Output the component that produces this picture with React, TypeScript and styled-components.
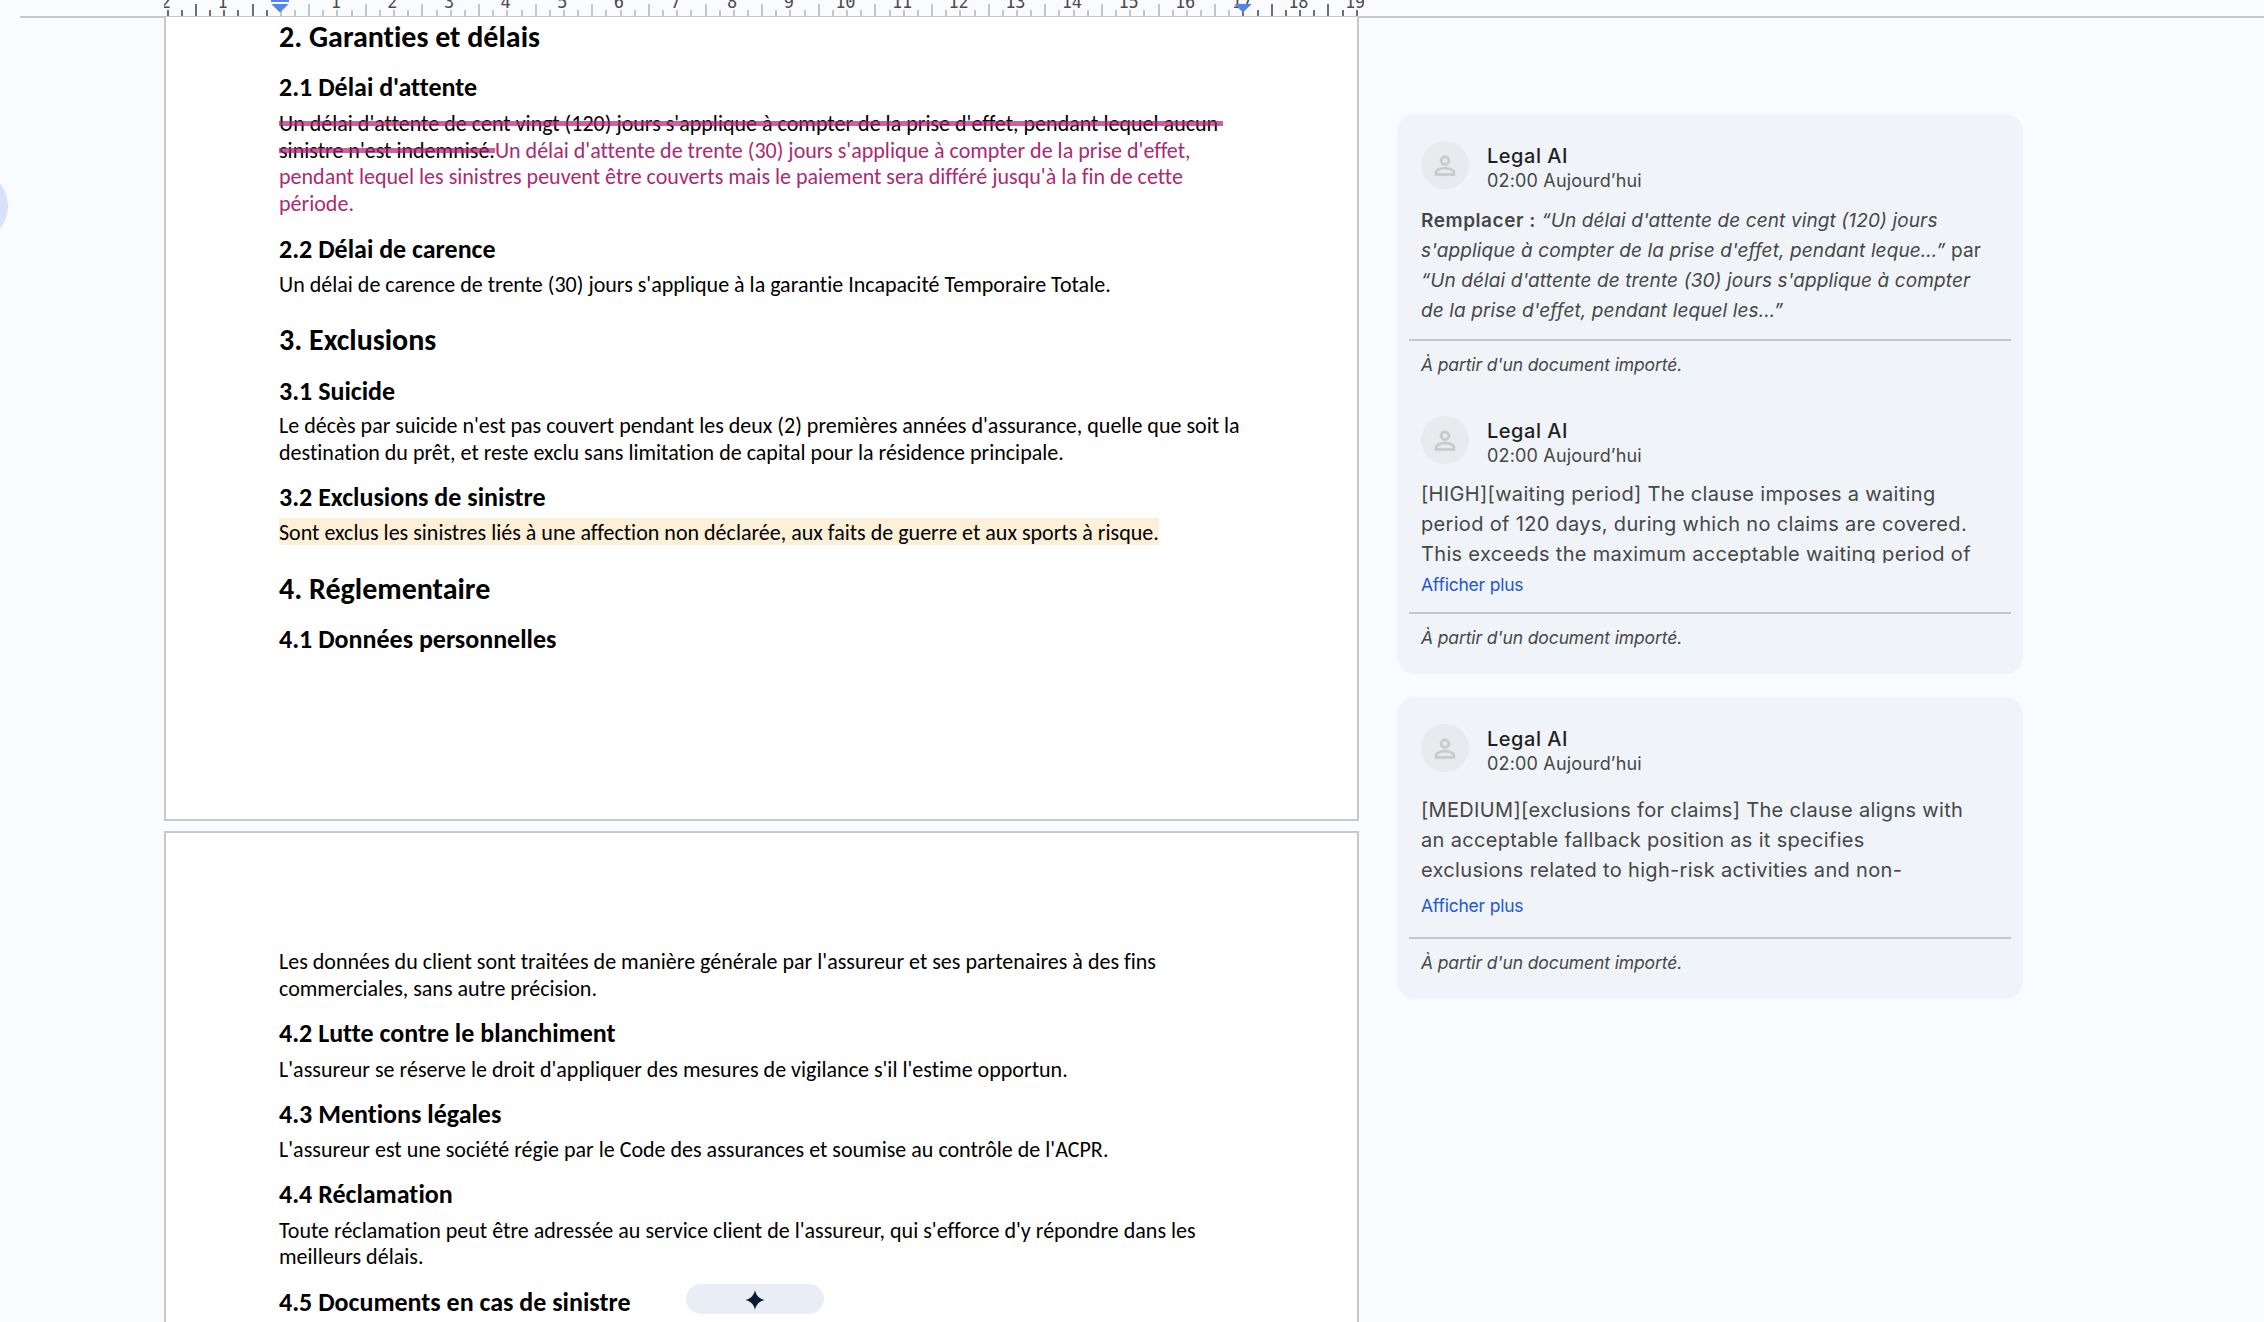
import React from "react";
import styled, { createGlobalStyle, css } from "styled-components";

const GlobalStyle = createGlobalStyle`
  *, *::before, *::after { box-sizing: border-box; }
  body { margin: 0; background: #f9fbff; overflow: hidden; }
`;

const DOC_FONT = `Carlito, Calibri, Lato, "Open Sans", sans-serif`;
const UI_FONT = `Inter, "Open Sans", Roboto, sans-serif`;

const Shell = styled.div`
  display: flex;
  flex-direction: column;
  position: relative;
  width: 2264px;
  height: 1322px;
  overflow: hidden;
  background: #f9fbff;
  font-family: ${UI_FONT};
`;

/* ---------- Ruler ---------- */

const RulerBar = styled.header`
  display: flex;
  flex: none;
  height: 18px;
  margin-left: 20px;
  border-bottom: 2px solid #c6c8ca;
`;

const RulerTrack = styled.div`
  display: flex;
  align-items: flex-end;
  position: relative;
  width: 1200px;
  height: 16px;
  margin-left: 144px;
  padding-left: 2.6px;
  overflow: hidden;
`;

const RulerCell = styled.div<{ $tall: boolean; $dark: boolean }>`
  flex: none;
  width: 14.17px;
  height: ${(p) => (p.$tall ? 12 : 6)}px;
  position: relative;

  &::before {
    content: "";
    position: absolute;
    left: 0;
    bottom: 0;
    width: 2px;
    height: 100%;
    background: ${(p) => (p.$dark ? "#6d7072" : "#c4c7c9")};
  }
`;

const RulerLabel = styled.span`
  position: absolute;
  left: -0.8px;
  bottom: 9px;
  transform: translateX(-50%);
  font: 400 17px/17px "DejaVu Sans Mono", monospace;
  letter-spacing: -0.2px;
  color: #4a4c4e;
  margin-bottom: -3.5px;
`;

const IndentMarker = styled.svg<{ $left: number }>`
  position: absolute;
  left: ${(p) => p.$left}px;
  top: 0;
  width: 18px;
  height: 13px;
`;

/* ---------- Pages ---------- */

const Workspace = styled.main`
  display: flex;
  align-items: flex-start;
  flex: 1;
  min-height: 0;
  padding-left: 164px;
`;

const Pages = styled.div`
  display: flex;
  flex-direction: column;
  flex: none;
  gap: 10px;
  width: 1195px;
  margin-top: -1px;
  position: relative;
`;

const Page = styled.section<{ $first?: boolean }>`
  height: ${(p) => (p.$first ? 804 : 520)}px;
  padding: ${(p) => (p.$first ? "5.2px" : "114.3px")} 0 0 113px;
  background: #fff;
  border: 2px solid #c6c8ca;
  ${(p) => p.$first && css`border-top: 0;`}
`;

const H1 = styled.h1`
  margin: 28.6px 0 22.3px;
  font: 700 30px/30px ${DOC_FONT};
  font-variant-ligatures: none;
  color: #000;
  white-space: nowrap;

  &:first-child { margin-top: 0; }
`;

const H2 = styled.h2<{ $tight?: boolean }>`
  margin: 0 0 ${(p) => (p.$tight ? 7.3 : 8.2)}px;
  font: 700 26px/26px ${DOC_FONT};
  font-variant-ligatures: none;
  color: #000;
  white-space: nowrap;

  p + & { margin-top: 19.4px; }
`;

const Paragraph = styled.p`
  margin: 0;
  color: #000;
`;

const Line = styled.span`
  display: block;
  height: 26.9px;
  padding-top: 4px;
  font: 400 22.02px/21px ${DOC_FONT};
  font-variant-ligatures: none;
  white-space: nowrap;
`;

const Highlight = styled.mark`
  display: block;
  width: fit-content;
  color: inherit;
  background: #fcf0d8;
`;

const Deleted = styled.del<{ $trail?: number }>`
  position: relative;
  display: inline-block;
  padding-right: ${(p) => p.$trail ?? 0}px;
  text-decoration: none;

  &::after {
    content: "";
    position: absolute;
    left: 0;
    right: 0;
    top: 8px;
    height: 5px;
    background: rgba(176, 36, 116, 0.7);
  }
`;

const Inserted = styled.ins`
  color: #ab2a73;
  text-decoration: none;
`;

/* ---------- Comments ---------- */

const Comments = styled.aside`
  display: flex;
  flex-direction: column;
  flex: none;
  gap: 23px;
  width: 626px;
  margin: 96px 0 0 38px;
`;

const Card = styled.article`
  display: flex;
  flex-direction: column;
  gap: 39px;
  padding: 27px 12px 24px;
  border-radius: 18px;
  background: #f0f4f9;
`;

const Thread = styled.div`
  display: flex;
  flex-direction: column;
`;

const ThreadHead = styled.div`
  display: flex;
  align-items: flex-start;
  gap: 18px;
  height: 48px;
  padding: 0 12px;
`;

const Avatar = styled.div`
  display: grid;
  place-items: center;
  flex: none;
  width: 48px;
  height: 48px;
  border-radius: 50%;
  background: #e8eaed;
  color: #c7cacd;
`;

const AuthorBlock = styled.div`
  display: flex;
  flex-direction: column;
  padding-top: 3px;
`;

const Author = styled.strong`
  font-weight: 500;
  font-size: 20px;
  line-height: 24px;
  letter-spacing: 0.52px;
  color: #1f1f1f;
`;

const Stamp = styled.time`
  font-size: 18px;
  line-height: 25px;
  letter-spacing: 0.17px;
  color: #444746;
`;

const Suggestion = styled.div`
  padding: 17px 12px 0;
  font-size: 19px;
  line-height: 30px;
  letter-spacing: 0.115px;
  color: #444746;
`;

const Action = styled.b`
  font-weight: 600;
  letter-spacing: 0.55px;
`;

const Remark = styled.div<{ $height: number; $top: number }>`
  height: ${(p) => p.$height}px;
  margin: ${(p) => p.$top}px 12px 0;
  overflow: hidden;
  font-size: 20px;
  line-height: 30px;
  letter-spacing: 0.32px;
  color: #444746;
`;

const TextRow = styled.span`
  display: block;
  white-space: nowrap;
`;

const MoreLink = styled.a<{ $top: number }>`
  margin: ${(p) => p.$top}px 12px 0;
  font-size: 17.5px;
  line-height: 24px;
  letter-spacing: -0.22px;
  color: #2455d3;
`;

const Origin = styled.footer<{ $top: number }>`
  margin-top: ${(p) => p.$top}px;
  padding: 12px 12px 0;
  border-top: 2px solid #c4c7c8;
  font-size: 17.5px;
  font-style: italic;
  line-height: 24px;
  letter-spacing: -0.12px;
  color: #444746;
`;

/* ---------- Floating pieces ---------- */

const SideBubble = styled.div`
  position: absolute;
  left: -64px;
  top: 170px;
  width: 72px;
  height: 72px;
  border-radius: 50%;
  background: #d6e2fb;
`;

const SparkPill = styled.button`
  position: absolute;
  left: 686px;
  top: 1284px;
  display: grid;
  place-items: center;
  width: 138px;
  height: 30px;
  padding: 2px 0 0;
  border: 0;
  border-radius: 15px;
  background: #e9eef6;
`;

/* Quarter-centimetre marks, from 2 cm left of the margin to 19 cm right of it */
const ticks = Array.from({ length: 85 }, (_, i) => i - 8);

function Ruler() {
  return (
    <RulerBar>
      <RulerTrack>
        {ticks.map((t) => (
          <RulerCell key={t} $tall={Math.abs(t % 4) === 2} $dark={t < 0 || t >= 68}>
            {t % 4 === 0 && t !== 0 && <RulerLabel>{Math.abs(t / 4)}</RulerLabel>}
          </RulerCell>
        ))}
        <IndentMarker $left={107} viewBox="0 0 18 13">
          <path d="M0 0h18v2H0zM0.3 4h17.4L9 12.6z" fill="#5384ec" />
        </IndentMarker>
        <IndentMarker $left={1070} viewBox="0 0 18 13">
          <path d="M0.3 4h17.4L9 12.6z" fill="#5384ec" />
        </IndentMarker>
      </RulerTrack>
    </RulerBar>
  );
}

function PersonAvatar() {
  return (
    <Avatar>
      <svg width="30" height="30" viewBox="0 -0.5 24 24" fill="currentColor" stroke="currentColor" strokeWidth="0.35">
        <path d="M12 5.9a2.1 2.1 0 1 1 0 4.2 2.1 2.1 0 0 1 0-4.2m0 9c2.97 0 6.1 1.46 6.1 2.1v1.1H5.9V17c0-.64 3.13-2.1 6.1-2.1M12 4C9.79 4 8 5.79 8 8s1.79 4 4 4 4-1.79 4-4-1.79-4-4-4zm0 9c-2.67 0-8 1.34-8 4v3h16v-3c0-2.66-5.33-4-8-4z" />
      </svg>
    </Avatar>
  );
}

function Head() {
  return (
    <ThreadHead>
      <PersonAvatar />
      <AuthorBlock>
        <Author>Legal AI</Author>
        <Stamp>02:00 Aujourd’hui</Stamp>
      </AuthorBlock>
    </ThreadHead>
  );
}

function Imported({ top }: { top: number }) {
  return <Origin $top={top}>À partir d'un document importé.</Origin>;
}

function Lines({ rows }: { rows: string[] }) {
  return (
    <Paragraph>
      {rows.map((r) => (
        <Line key={r}>{r}</Line>
      ))}
    </Paragraph>
  );
}

export default function App() {
  return (
    <Shell>
      <GlobalStyle />
      <Ruler />
      <Workspace>
        <Pages>
          <Page $first>
            <H1>2. Garanties et délais</H1>
            <H2>2.1 Délai d'attente</H2>
            <Paragraph>
              <Line>
                <Deleted $trail={5}>
                  Un délai d'attente de cent vingt (120) jours s'applique à compter de la prise d'effet, pendant lequel aucun
                </Deleted>
              </Line>
              <Line>
                <Deleted>sinistre n'est indemnisé.</Deleted>
                <Inserted>Un délai d'attente de trente (30) jours s'applique à compter de la prise d'effet,</Inserted>
              </Line>
              <Line>
                <Inserted>
                  pendant lequel les sinistres peuvent être couverts mais le paiement sera différé jusqu'à la fin de cette
                </Inserted>
              </Line>
              <Line>
                <Inserted>période.</Inserted>
              </Line>
            </Paragraph>
            <H2>2.2 Délai de carence</H2>
            <Lines rows={["Un délai de carence de trente (30) jours s'applique à la garantie Incapacité Temporaire Totale."]} />
            <H1>3. Exclusions</H1>
            <H2 $tight>3.1 Suicide</H2>
            <Lines
              rows={[
                "Le décès par suicide n'est pas couvert pendant les deux (2) premières années d'assurance, quelle que soit la",
                "destination du prêt, et reste exclu sans limitation de capital pour la résidence principale.",
              ]}
            />
            <H2>3.2 Exclusions de sinistre</H2>
            <Paragraph>
              <Highlight>
                <Line>
                  Sont exclus les sinistres liés à une affection non déclarée, aux faits de guerre et aux sports à risque.
                </Line>
              </Highlight>
            </Paragraph>
            <H1>4. Réglementaire</H1>
            <H2>4.1 Données personnelles</H2>
          </Page>
          <Page>
            <Lines
              rows={[
                "Les données du client sont traitées de manière générale par l'assureur et ses partenaires à des fins",
                "commerciales, sans autre précision.",
              ]}
            />
            <H2>4.2 Lutte contre le blanchiment</H2>
            <Lines rows={["L'assureur se réserve le droit d'appliquer des mesures de vigilance s'il l'estime opportun."]} />
            <H2>4.3 Mentions légales</H2>
            <Lines rows={["L'assureur est une société régie par le Code des assurances et soumise au contrôle de l'ACPR."]} />
            <H2>4.4 Réclamation</H2>
            <Lines
              rows={[
                "Toute réclamation peut être adressée au service client de l'assureur, qui s'efforce d'y répondre dans les",
                "meilleurs délais.",
              ]}
            />
            <H2>4.5 Documents en cas de sinistre</H2>
          </Page>
        </Pages>
        <Comments>
          <Card>
            <Thread>
              <Head />
              <Suggestion>
                <TextRow>
                  <Action>Remplacer :</Action> <em>“Un délai d'attente de cent vingt (120) jours</em>
                </TextRow>
                <TextRow>
                  <em>s'applique à compter de la prise d'effet, pendant leque…”</em> par
                </TextRow>
                <TextRow>
                  <em>“Un délai d'attente de trente (30) jours s'applique à compter</em>
                </TextRow>
                <TextRow>
                  <em>de la prise d'effet, pendant lequel les…”</em>
                </TextRow>
              </Suggestion>
              <Imported top={13} />
            </Thread>
            <Thread>
              <Head />
              <Remark $height={84} $top={15}>
                <TextRow>[HIGH][waiting period] The clause imposes a waiting</TextRow>
                <TextRow>period of 120 days, during which no claims are covered.</TextRow>
                <TextRow>This exceeds the maximum acceptable waiting period of</TextRow>
              </Remark>
              <MoreLink $top={10}>Afficher plus</MoreLink>
              <Imported top={15} />
            </Thread>
          </Card>
          <Card>
            <Thread>
              <Head />
              <Remark $height={90} $top={22.5}>
                <TextRow>[MEDIUM][exclusions for claims] The clause aligns with</TextRow>
                <TextRow>an acceptable fallback position as it specifies</TextRow>
                <TextRow>exclusions related to high-risk activities and non-</TextRow>
              </Remark>
              <MoreLink $top={9}>Afficher plus</MoreLink>
              <Imported top={19.5} />
            </Thread>
          </Card>
        </Comments>
      </Workspace>
      <SideBubble />
      <SparkPill aria-label="Gemini">
        <svg width="20" height="20" viewBox="0 0 20 20" fill="#071b34">
          <path d="M10 0.3C11.2 5.6 14.4 8.8 19.7 10 14.4 11.2 11.2 14.4 10 19.7 8.8 14.4 5.6 11.2 0.3 10 5.6 8.8 8.8 5.6 10 0.3z" />
        </svg>
      </SparkPill>
    </Shell>
  );
}
